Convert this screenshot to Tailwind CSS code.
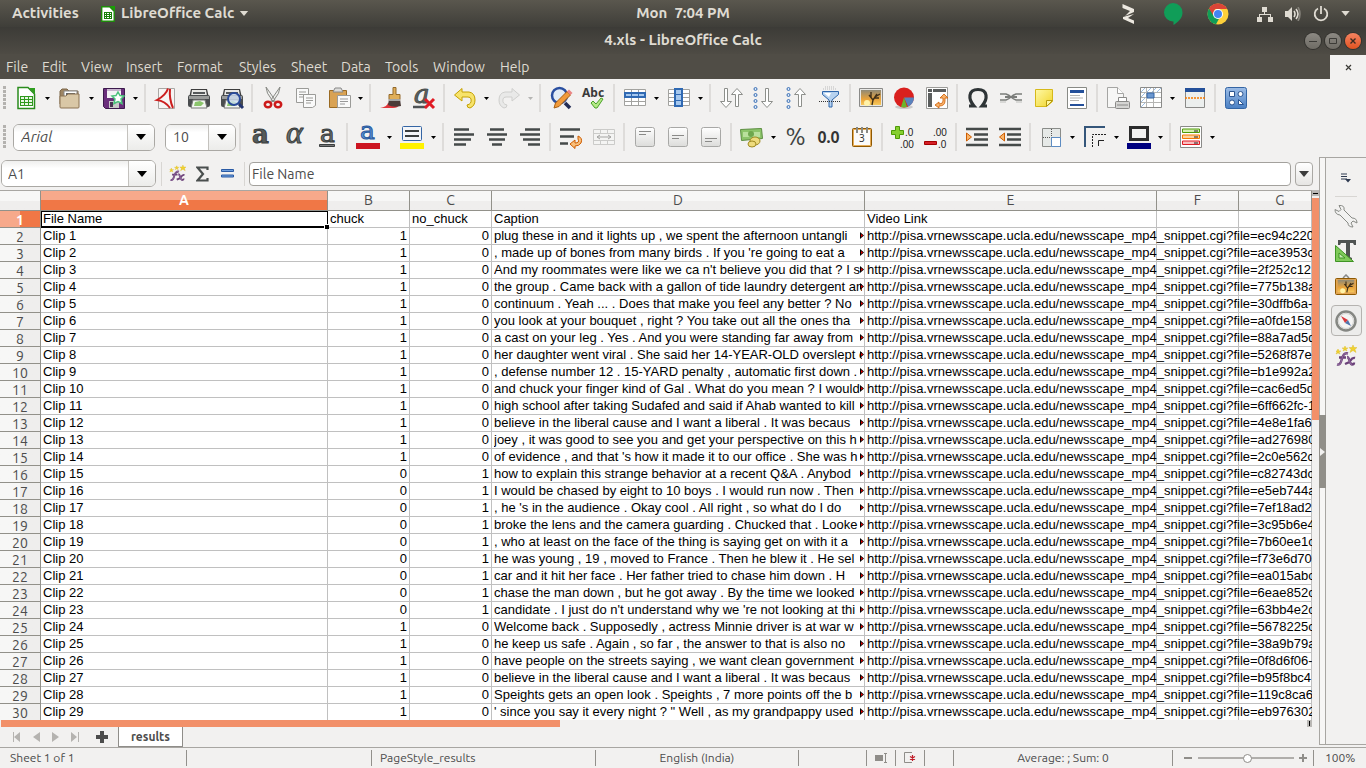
<!DOCTYPE html>
<html lang="en">
<head>
<meta charset="utf-8">
<meta name="viewport" content="width=device-width, initial-scale=1">
<title>4.xls - LibreOffice Calc</title>
<script src="https://cdn.jsdelivr.net/npm/@tailwindcss/browser@4"></script>
</head>
<body class="flex h-screen flex-col overflow-hidden bg-[#f2f1f0] font-['Ubuntu','Noto_Sans',sans-serif] text-[#4c4c4c]">

<!-- Shared symbols and gradients -->
<svg class="absolute size-0" aria-hidden="true">
  <defs>
    <linearGradient id="blueG" x1="0" y1="0" x2="0" y2="1"><stop offset="0" stop-color="#9dbde6"/><stop offset="1" stop-color="#4a80c4"/></linearGradient>
    <linearGradient id="yelG" x1="0" y1="0" x2="1" y2="1"><stop offset="0" stop-color="#fff9a8"/><stop offset="1" stop-color="#f0d52a"/></linearGradient>
    <linearGradient id="greyG" x1="0" y1="0" x2="0" y2="1"><stop offset="0" stop-color="#ffffff"/><stop offset="1" stop-color="#dcdcda"/></linearGradient>
    <linearGradient id="sunG" x1="0" y1="0" x2="0" y2="1"><stop offset="0" stop-color="#8f8a78"/><stop offset=".6" stop-color="#e8a23a"/><stop offset="1" stop-color="#f7c95c"/></linearGradient>
    <symbol id="arr" viewBox="0 0 5 3"><path d="M0 0h5L2.500 3z" fill="currentColor"/></symbol>
    <symbol id="caret" viewBox="0 0 10 6"><path d="M0 0h10L5 6z" fill="currentColor"/></symbol>
    <symbol id="printer" viewBox="0 0 24 24">
      <path d="M4 3h16l2 9H2z" fill="#3d3d3d"/><path d="M5 4h14l1 6H4z" fill="#e8e8e6"/><path d="M6 6h12v2H6z" fill="#55585a"/>
      <rect x="1" y="9" width="22" height="12" rx="2" fill="#4a4d4f"/><rect x="2" y="10" width="20" height="3" fill="#9a9c9b"/>
      <path d="M6 14h12l2 8H4z" fill="#f4f7f2" stroke="#777"/><path d="M8 16l5-1 4 2-3 3-7 0z" fill="#8bc56c"/>
    </symbol>
    <symbol id="fx" viewBox="0 0 22 22">
      <path d="M2 19.500c4 1 4-3 5-6s2-6 6-5M4 12.500h7M12 12c3 0 2 7 5 7.500q2 0 2-2M20 13c-3-1-4 2-5.500 4t-4.500 2" fill="none" stroke="#6b4179" stroke-width="2.400"/>
      <path d="M2 19.500c4 1 4-3 5-6s2-6 6-5M12 12c3 0 2 7 5 7.500" fill="none" stroke="#a27bb0" stroke-width=".8"/>
      <path d="M18 0l1 2.500h3l-2 2 1 3-3-2-3 2 1-3-2-2h3zM10 1l1 2h2l-2 1 1 2-2-1-2 1 1-2-2-1h2zM3 4l1 2h2l-2 1 1 2-2-1-2 1 1-2-1-1h1z" fill="#f0d130" stroke="#d9b818" stroke-width=".4"/>
    </symbol>
    <symbol id="tree" viewBox="0 0 24 20">
      <rect x="2" y="2" width="20" height="15" fill="url(#sunG)"/><circle cx="8" cy="15" r="3" fill="#fff2a8"/>
      <path d="M13 17l1-5-4-5M14 12l4-6M12 9l0-5M16 9l5-3M15 10l5 0" fill="none" stroke="#40301a" stroke-width="1.400"/>
    </symbol>
  </defs>
</svg>

<!-- Desktop panel -->
<header class="relative flex h-[27px] shrink-0 items-center bg-linear-to-b from-[#5a574e] to-[#3f3e39] text-[15px] font-bold text-[#dfdbd2]">
  <button class="ml-3 w-[69px] text-left">Activities</button>
  <button class="ml-5 flex items-center">
    <svg class="mr-[6px] h-4 w-[14px]" viewBox="0 0 14 16"><path d="M.700.700h8l4.500 4.500v10H.700z" fill="#fff" stroke="#1e8c0a" stroke-width="1.400"/><path d="M9 0h5v5z" fill="#18a303"/><path d="M3 6h8v7H3z" fill="#18800a"/><path d="M4 7h1v1H4zM6 7h2v1H6zM9 7h1v1H9zM4 9h1v1H4zM6 9h2v1H6zM9 9h1v1H9zM4 11h1v1H4zM6 11h2v1H6zM9 11h1v1H9z" fill="#fff"/></svg>
    <span>LibreOffice Calc</span>
    <svg class="ml-[5px] h-[5px] w-[10px]"><use href="#caret"/></svg>
  </button>
  <button class="absolute left-1/2 -translate-x-1/2">Mon&nbsp; 7:04 PM</button>
  <div class="ml-auto flex items-center pr-4">
    <button aria-label="Updates" class="mr-7"><svg class="h-[20px] w-[13px]" viewBox="0 0 13 20" fill="#ece8e0"><path d="M.500 0L12 5v3L3 12l5-5L.500 4z"/><path d="M12 10L6 14l6 2.500V20L1 15v-2z"/></svg></button>
    <button aria-label="Hangouts" class="mr-6"><svg class="h-[22px] w-[20px]" viewBox="0 0 20 22"><path d="M10 0a9.500 9.500 0 0 1 9.500 9.500c0 6-5 10-9 12.500v-3.500A9 9 0 0 1 1 9.500 9.500 9.500 0 0 1 10 0z" fill="#109d58"/></svg></button>
    <button aria-label="Chrome" class="mr-7"><svg class="size-[22px]" viewBox="0 0 22 22"><circle cx="11" cy="11" r="10.500" fill="#fdd03b"/><path d="M11 11L2 5.500A10.500 10.500 0 0 0 9 21.300L13.500 13z" fill="#109d58"/><path d="M11 .500A10.500 10.500 0 0 0 2 5.500L6 12l2-6h12.200A10.500 10.500 0 0 0 11 .500z" fill="#db4437"/><circle cx="11" cy="11" r="5" fill="#fff"/><circle cx="11" cy="11" r="4" fill="#4285f4"/></svg></button>
    <button aria-label="Network" class="mr-3"><svg class="size-4" viewBox="0 0 16 16" fill="#dfdbd2"><path d="M5 1h5v5H8v2h6v3h2v5h-5v-5h2V9H3v2h2v5H0v-5h2V8h5V6H5z"/></svg></button>
    <button aria-label="Volume" class="mr-3"><svg class="h-[14px] w-4" viewBox="0 0 16 14" fill="none" stroke="#dfdbd2" stroke-width="1.600"><path d="M0 4h3l4-4v14l-4-4H0z" fill="#dfdbd2" stroke="none"/><path d="M9 4q2 3 0 6M11 2q4 5 0 10"/><path d="M13 0q4 7 0 14" stroke="#85827a"/></svg></button>
    <button aria-label="Power" class="mr-3"><svg class="size-4" viewBox="0 0 16 16" fill="none" stroke="#dfdbd2" stroke-width="1.800"><path d="M5 2.500a6.300 6.300 0 1 0 6 0M8 0v8"/></svg></button>
    <button aria-label="System menu"><svg class="h-[5px] w-[9px]"><use href="#caret"/></svg></button>
  </div>
</header>

<!-- Window title -->
<div class="relative flex h-[27px] shrink-0 items-center justify-end gap-1 bg-linear-to-b from-[#3c3b37] to-[#4e4b44] text-[15px] font-bold text-[#dfdbd2]">
  <h1 class="absolute left-1/2 -translate-x-1/2">4.xls - LibreOffice Calc</h1>
  <button aria-label="Minimize" class="size-4 rounded-full bg-linear-to-b from-[#8c8983] to-[#6f6c65] text-[#3c3b37] ring-1 ring-[#33322e]"><svg viewBox="0 0 16 16"><path d="M4 8.500h8" stroke="currentColor"/></svg></button>
  <button aria-label="Maximize" class="size-4 rounded-full bg-linear-to-b from-[#8c8983] to-[#6f6c65] text-[#3c3b37] ring-1 ring-[#33322e]"><svg viewBox="0 0 16 16"><path d="M4.500 5.500h7v5h-7z" fill="none" stroke="currentColor"/></svg></button>
  <button aria-label="Close" class="mr-[5px] size-4 rounded-full bg-linear-to-b from-[#f58360] to-[#e2521c] text-[#3c2a20] ring-1 ring-[#33322e]"><svg viewBox="0 0 16 16"><path d="M5.500 5.500l5 5M10.500 5.500l-5 5" stroke="currentColor" stroke-width="1.400"/></svg></button>
</div>

<!-- Menu bar -->
<nav class="flex h-[25px] shrink-0 items-end bg-[#504d46] pl-[6px] text-sm leading-[23px] text-[#dfdbd2] *:text-left">
  <button class="w-9">File</button><button class="w-[39px]">Edit</button><button class="w-[45px]">View</button><button class="w-[51px]">Insert</button><button class="w-[62px]">Format</button><button class="w-[52px]">Styles</button><button class="w-[50px]">Sheet</button><button class="w-11">Data</button><button class="w-12">Tools</button><button class="w-[67px]">Window</button><button>Help</button>
  <button aria-label="Close document" class="ml-auto flex h-6 w-9 items-center justify-center bg-[#f2f1f0] text-[#3c3b37]"><svg class="size-[7px]" viewBox="0 0 7 7"><path d="M1 1l5 5M6 1L1 6" stroke="currentColor" stroke-width="1.200"/></svg></button>
</nav>

<!-- Standard toolbar -->
<div role="toolbar" aria-label="Standard" class="flex h-[38px] shrink-0 items-center [&_svg]:overflow-visible [&>button]:flex [&>button]:h-7 [&>button]:shrink-0 [&>button]:items-center [&>button]:justify-center [&>i]:mx-[3px] [&>i]:h-7 [&>i]:w-[2px] [&>i]:shrink-0 [&>i]:bg-[#dedcda]">
  <span class="mr-[3px] ml-[3px] h-6 w-[3px] bg-[repeating-linear-gradient(#b4b2af_0_3px,#f2f1f0_3px_4px)]"></span>
  <button class="w-[33px]" aria-label="New"><svg class="size-6" viewBox="0 0 24 24"><path d="M4 1.500h10l6.500 6.500v14.500H4z" fill="#fff" stroke="#2a8c1c" stroke-width="1.500"/><path d="M15 2h6v6z" fill="#2f9e1f"/><path d="M6 10h13v10H6z" fill="#2e9a1c"/><path d="M7 11h3v2H7zM11 11h3v2h-3zM15 11h3v2h-3zM7 14h3v2H7zM11 14h3v2h-3zM15 14h3v2h-3zM7 17h3v2H7zM11 17h3v2h-3zM15 17h3v2h-3z" fill="#e9f7e5"/></svg></button>
  <button class="w-[11px] text-black" aria-label="New menu"><svg class="h-[3px] w-[5px]"><use href="#arr"/></svg></button>
  <button class="w-[33px]" aria-label="Open"><svg class="size-6" viewBox="0 0 24 24"><path d="M2 18V5l2-2h5l2 2h9v13z" fill="#9d8463" stroke="#7c6648"/><path d="M6 5h13v8H6z" fill="#fff" stroke="#888"/><path d="M8 7h9v2H8z" fill="#666"/><path d="M2 10h6l2-2h11v13q0 1-1 1H3q-1 0-1-1z" fill="#d9c7a6" stroke="#8b7353"/></svg></button>
  <button class="w-[11px] text-black" aria-label="Open menu"><svg class="h-[3px] w-[5px]"><use href="#arr"/></svg></button>
  <button class="w-[33px]" aria-label="Save"><svg class="size-6" viewBox="0 0 24 24"><path d="M1.500 2.500h21v20h-19l-2-2z" fill="#6b2f7c" stroke="#3c1a4c"/><path d="M5 3h14v9H5z" fill="#f5f3f6"/><path d="M5 3h14v2H5z" fill="#c8b5ce"/><path d="M7 15h10v7H7z" fill="#c9c9c7"/><path d="M8 16h3v5H8z" fill="#4a3352"/><path d="M16 6l2 3.500 4 .500-3 3 1 4.500-4-2-4 2 1-4.500-3-3 4-.500z" fill="#fff" stroke="#4cc27c" stroke-width="1.500"/></svg></button>
  <button class="w-[11px] text-black" aria-label="Save menu"><svg class="h-[3px] w-[5px]"><use href="#arr"/></svg></button>
  <i></i>
  <button class="w-[33px]" aria-label="Export as PDF"><svg class="size-6" viewBox="0 0 24 24"><path d="M4.500 2.500h16v20h-16z" fill="#f7f5f4" stroke="#aaa7a4"/><path d="M14 2.500Q12 9 3 14q8 1 13 8M16 3q-1 10 3 19" fill="none" stroke="#cc1f1f" stroke-width="2"/></svg></button>
  <button class="w-[33px]" aria-label="Print"><svg class="size-6"><use href="#printer"/></svg></button>
  <button class="w-[33px]" aria-label="Print preview"><svg class="size-6" viewBox="0 0 24 24"><use href="#printer"/><circle cx="14" cy="13" r="6" fill="#cfe0f3" fill-opacity=".8" stroke="#2a4b9b" stroke-width="2"/><path d="M19 18l4 4" stroke="#23346e" stroke-width="3"/></svg></button>
  <i></i>
  <button class="w-[33px]" aria-label="Cut"><svg class="size-6" viewBox="0 0 24 24"><path d="M5 1q0 6 6 13l2 2 1-2zM19 1q0 6-6 13l-2 2-1-2z" fill="#eeeeec" stroke="#888a85"/><ellipse cx="7" cy="18.500" rx="3.200" ry="2.800" fill="none" stroke="#cc1a1a" stroke-width="2.500"/><ellipse cx="17" cy="18.500" rx="3.200" ry="2.800" fill="none" stroke="#cc1a1a" stroke-width="2.500"/></svg></button>
  <button class="w-[33px]" aria-label="Copy"><svg class="size-6" viewBox="0 0 24 24" fill="#fafafa" stroke="#9b9b98"><path d="M2.500 2.500h12v14h-12z"/><path d="M5 6h7M5 8.500h7M5 11h5"/><path d="M9.500 8.500h12v11l-3 2h-9z"/><path d="M12 12h7M12 14.500h7M12 17h5"/></svg></button>
  <button class="w-[33px]" aria-label="Paste"><svg class="size-6" viewBox="0 0 24 24"><path d="M2.500 4.500h17v17h-17z" fill="#d9a253" stroke="#9a6a22"/><path d="M6 6l2-4h6l2 4z" fill="#dcdcda" stroke="#888"/><path d="M10.500 9.500h13v12h-13z" fill="#fafafa" stroke="#9b9b98"/><path d="M13 13h8M13 15.500h8M13 18h5" stroke="#999"/></svg></button>
  <button class="w-[11px] text-black" aria-label="Paste menu"><svg class="h-[3px] w-[5px]"><use href="#arr"/></svg></button>
  <i></i>
  <button class="w-[33px]" aria-label="Clone formatting"><svg class="size-6" viewBox="0 0 24 24"><path d="M1 22q7-1 8-5l11 2q-1 3-6 3z" fill="#e0343a"/><path d="M14 1.500h3v7h4v5H10v-5h4z" fill="#e0ae58" stroke="#93692a"/><path d="M10 13h11l1 7q-8 2-13-1z" fill="#4b3b38"/><path d="M10 13h11v2H10z" fill="#a5a5a3"/></svg></button>
  <button class="w-[33px]" aria-label="Clear formatting"><svg class="size-6" viewBox="0 0 24 24"><text x="2" y="17" font-family="DejaVu Serif" font-size="26" font-style="italic" fill="#5d6362" stroke="#4a4f4e">a</text><path d="M1 21h13" stroke="#4e5254" stroke-width="2.500"/><path d="M13 13l9 9M22 13l-9 9" stroke="#e01b24" stroke-width="3"/></svg></button>
  <i></i>
  <button class="w-[33px]" aria-label="Undo"><svg class="size-6" viewBox="0 0 24 24"><path d="M1.500 9L9 2.500V6h7q6 1 6 8 0 6-5 8-3 0-3-3 5-1 4-6-.500-2-3-2H9v4z" fill="#f7e36b" stroke="#c4a000" stroke-linejoin="round"/></svg></button>
  <button class="w-[11px] text-black" aria-label="Undo menu"><svg class="h-[3px] w-[5px]"><use href="#arr"/></svg></button>
  <button class="w-[33px]" aria-label="Redo" disabled><svg class="size-6" viewBox="0 0 24 24"><path d="M22.500 9L15 2.500V6H8q-6 1-6 8 0 6 5 8 3 0 3-3-5-1-4-6 .500-2 3-2h6v4z" fill="#e9e9e8" stroke="#cfcfcd" stroke-linejoin="round"/></svg></button>
  <button class="w-[11px] text-[#b5b5b3]" aria-label="Redo menu" disabled><svg class="h-[3px] w-[5px]"><use href="#arr"/></svg></button>
  <i></i>
  <button class="w-[33px]" aria-label="Find and replace"><svg class="size-6" viewBox="0 0 24 24"><path d="M16 17l5 5" stroke="#222c55" stroke-width="3.500"/><circle cx="10.500" cy="9.500" r="7.500" fill="#e2ecf7" stroke="#2a4fa0" stroke-width="2.500"/><path d="M5 22l1.500-5L18 5.500 21.500 9 10 20.500z" fill="#f19a3a" stroke="#a85f12"/><path d="M18 5.500l2-2 3.500 3.500-2 2z" fill="#ea8585"/></svg></button>
  <button class="w-[33px]" aria-label="Spelling"><svg class="size-6" viewBox="0 0 24 24"><text x="0" y="11" font-family="Noto Sans" font-size="12" font-weight="bold" fill="#3a3a3a">Abc</text><path d="M9 17l2-2 3 3 5-6 2 1-6 9h-2z" fill="#b4ea86" stroke="#4aa12a"/></svg></button>
  <i></i>
  <button class="w-[33px]" aria-label="Row"><svg class="size-6" viewBox="0 0 24 24"><path d="M1.500 3.500h21v16h-21zM1.500 15.500h21M8.500 3v17M15.500 3v17" fill="#fff" stroke="#a2a29f"/><path d="M1 6h22v6H1z" fill="#2f69b3"/><path d="M3 8h5v2H3zM9 8h6v2H9zM16 8h5v2h-5z" fill="#a6c8ee"/></svg></button>
  <button class="w-[11px] text-black" aria-label="Row menu"><svg class="h-[3px] w-[5px]"><use href="#arr"/></svg></button>
  <button class="w-[33px]" aria-label="Column"><svg class="size-6" viewBox="0 0 24 24"><path d="M1.500 3.500h21v16h-21zM1.500 7.500h21M1.500 11.500h21M1.500 15.500h21" fill="#fff" stroke="#a2a29f"/><path d="M7 2h9v19H7z" fill="#2f69b3"/><path d="M9 4h5v4H9zM9 9h5v5H9zM9 15h5v4H9z" fill="#a6c8ee"/></svg></button>
  <button class="w-[11px] text-black" aria-label="Column menu"><svg class="h-[3px] w-[5px]"><use href="#arr"/></svg></button>
  <i></i>
  <button class="w-[33px]" aria-label="Sort"><svg class="size-6" viewBox="0 0 24 24" fill="#fff" stroke="#8d8f8b"><path d="M5.500 2.500h3v13h4l-5.500 6-5.500-6h4z"/><path d="M16.500 20.500h3v-12h4l-5.500-6-5.500 6h4z"/></svg></button>
  <button class="w-[33px]" aria-label="Sort ascending"><svg class="size-6" viewBox="0 0 24 24" fill="#fff" stroke="#8d8f8b"><path d="M13.500 2.500h3v13h4l-5.500 6-5.500-6h4z"/><g stroke="#3a6fb5" fill="#dbe8f7"><circle cx="3.500" cy="3" r="1.500"/><circle cx="3.500" cy="9" r="1.500"/><circle cx="3.500" cy="15" r="1.500"/><circle cx="3.500" cy="21" r="1.500"/></g></svg></button>
  <button class="w-[33px]" aria-label="Sort descending"><svg class="size-6" viewBox="0 0 24 24" fill="#fff" stroke="#8d8f8b"><path d="M13.500 20.500h3v-12h4l-5.500-6-5.500 6h4z"/><g stroke="#3a6fb5" fill="#dbe8f7"><circle cx="3.500" cy="3" r="1.500"/><circle cx="3.500" cy="9" r="1.500"/><circle cx="3.500" cy="15" r="1.500"/><circle cx="3.500" cy="21" r="1.500"/></g></svg></button>
  <button class="w-[33px]" aria-label="AutoFilter"><svg class="size-6" viewBox="0 0 24 24"><path d="M5 3h14M7 1h10" stroke="#bbb" stroke-dasharray="1 1"/><path d="M4.500 5.500h16v3L14 14v7h-3v-7L4.500 8.500z" fill="#b7d2ef" stroke="#2f66ab"/><path d="M6 7h7l-2 4z" fill="#fff"/><path d="M1 15.500h22" stroke="#333" stroke-dasharray="1 1"/></svg></button>
  <i></i>
  <button class="w-[33px]" aria-label="Image"><svg class="h-[20px] w-6" viewBox="0 0 24 20"><path d="M.500.500h23v18H.500z" fill="#e8e8e6" stroke="#8a8a88"/><use href="#tree" width="24" height="20"/></svg></button>
  <button class="w-[33px]" aria-label="Chart"><svg class="size-6" viewBox="0 0 24 24"><ellipse cx="12" cy="21" rx="9" ry="2" fill="#ccc"/><circle cx="12" cy="11.500" r="10" fill="#d9201e"/><path d="M12 11.500h10a10 10 0 0 1-6 9z" fill="#5a83bd"/><path d="M12 11.500l3 9.500a10 10 0 0 1-6 0z" fill="#6cb52c"/></svg></button>
  <button class="w-[33px]" aria-label="Pivot table"><svg class="size-6" viewBox="0 0 24 24"><path d="M1.500 1.500h21v21h-21z" fill="#fff" stroke="#9b9b98"/><path d="M3 3h4v3H3zM8 3h13v3H8zM3 7h4v14H3z" fill="#5a5d5d"/><path d="M19 8l-4 4h3v3q0 3-4 3v-2l-4 3 4 3v-2q6 0 6-5v-3h3z" fill="#f7b26b" stroke="#ce5c00" stroke-width=".8"/></svg></button>
  <i></i>
  <button class="w-[33px]" aria-label="Special character"><svg class="size-6" viewBox="0 0 24 24"><path d="M3 20h5C2 13 2 3.500 12 3.500s10 9.500 4 16.500h5" fill="none" stroke="#2e3436" stroke-width="3.200"/></svg></button>
  <button class="w-[33px]" aria-label="Hyperlink"><svg class="size-6" viewBox="0 0 24 24" fill="none" stroke="#7b7d7a" stroke-width="1.500"><path d="M1 8h6q3 1 5 3 2-2 5-3h6M1 14h6q3-1 5-3 2 2 5 3h6"/><path d="M6 11h12" stroke-width="2"/><path d="M1 16h6M17 16h6" stroke="#cfcfcd"/></svg></button>
  <button class="w-[33px]" aria-label="Comment"><svg class="size-6" viewBox="0 0 24 24"><path d="M3.500 3.500h17v12l-6 5h-11z" fill="url(#yelG)" stroke="#d6b91a"/><path d="M20.500 14.500h-6v6z" fill="#fff7a0" stroke="#b59a0c"/></svg></button>
  <button class="w-[33px]" aria-label="Headers and footers"><svg class="size-6" viewBox="0 0 24 24"><path d="M2.500 1.500h19v21h-19z" fill="#fff" stroke="#888a85"/><path d="M5 4h14v3H5zM5 18h14v2H5z" fill="#24509a"/><path d="M5 9.500h10M5 12h13M5 14.500h9" stroke="#b5b5b3"/></svg></button>
  <i></i>
  <button class="w-[33px]" aria-label="Define print area"><svg class="size-6" viewBox="0 0 24 24"><path d="M1.500 1.500h10l6 6v14h-16z" fill="#f7f7f6" stroke="#a5a5a3"/><path d="M11.500 1.500v6h6" fill="#fff" stroke="#a5a5a3"/><path d="M12.500 11.500h8v4h-8z" fill="#fff" stroke="#8a8a88"/><rect x="9.500" y="15.500" width="14" height="7" rx="1" fill="#d5d5d3" stroke="#8a8a88"/><path d="M11 19h11" stroke="#8a8a88"/></svg></button>
  <button class="w-[33px]" aria-label="Freeze"><svg class="size-6" viewBox="0 0 24 24"><path d="M1.500 1.500h21v20h-21z" fill="#fff" stroke="#8a8a88"/><path d="M2 6l4-4M2 11l5-5M2 16l5-5M2 21l5-5M8 6l4-4M13 6l4-4M18 6l4-4" stroke="#9cbce0"/><path d="M7.500 2v19M2 6.500h20M2 11.500h20M2 16.500h20M14.500 2v19" stroke="#b5b5b3"/><path d="M8 7h7v5H8z" fill="#6b97d0" stroke="#3465a4"/></svg></button>
  <button class="w-[11px] text-black" aria-label="Freeze menu"><svg class="h-[3px] w-[5px]"><use href="#arr"/></svg></button>
  <button class="w-[33px]" aria-label="Split window"><svg class="size-6" viewBox="0 0 24 24"><path d="M2.500 2.500h19v19h-19z" fill="#ecefee" stroke="#8a8a88"/><path d="M2 2h20v4H2z" fill="#24509a"/><path d="M2 12h20" stroke="#f57900" stroke-width="1.500" stroke-dasharray="2 1"/></svg></button>
  <i></i>
  <button class="w-[33px]" aria-label="Draw functions"><svg class="size-6" viewBox="0 0 24 24"><rect x="1.500" y="1.500" width="21" height="21" rx="2" fill="url(#blueG)" stroke="#3465a4"/><g fill="#fff" stroke="#2c5590"><path d="M5.500 5.500h5v5h-5z"/><circle cx="16.500" cy="8" r="2.500"/><circle cx="8" cy="16.500" r="2.500"/><path d="M14.500 13.500v5h5z"/></g></svg></button>
</div>

<!-- Formatting toolbar -->
<div role="toolbar" aria-label="Formatting" class="flex h-10 shrink-0 items-center [&_svg]:overflow-visible [&>button]:flex [&>button]:h-7 [&>button]:shrink-0 [&>button]:items-center [&>button]:justify-center [&>i]:mx-[3px] [&>i]:h-7 [&>i]:w-[2px] [&>i]:shrink-0 [&>i]:bg-[#dedcda]">
  <span class="ml-[3px] h-6 w-[3px] bg-[repeating-linear-gradient(#b4b2af_0_3px,#f2f1f0_3px_4px)]"></span>
  <div class="ml-[7px] flex h-[27px] w-[142px] shrink-0 overflow-hidden rounded-md border border-[#aaa8a4] bg-white">
    <input aria-label="Font name" value="Arial" class="min-w-0 flex-1 bg-linear-to-b from-[#efefee] to-white to-30% pl-[7px] text-[15px] italic outline-none">
    <button aria-label="Font list" class="flex w-[27px] items-center justify-center border-l border-[#c4c2be] bg-linear-to-b from-white to-[#ececea] text-black"><svg class="h-[6px] w-[10px]"><use href="#caret"/></svg></button>
  </div>
  <div class="ml-[10px] flex h-[27px] w-[71px] shrink-0 overflow-hidden rounded-md border border-[#aaa8a4] bg-white">
    <input aria-label="Font size" value="10" class="min-w-0 flex-1 bg-linear-to-b from-[#efefee] to-white to-30% pl-[7px] text-sm outline-none">
    <button aria-label="Size list" class="flex w-[27px] items-center justify-center border-l border-[#c4c2be] bg-linear-to-b from-white to-[#ececea] text-black"><svg class="h-[6px] w-[10px]"><use href="#caret"/></svg></button>
  </div>
  <i></i>
  <button class="w-[33px]" aria-label="Bold"><svg class="size-6" viewBox="0 0 24 24"><text x="3" y="18" font-family="DejaVu Serif" font-size="26" font-weight="bold" fill="#555b5a" stroke="#3a3e3e">a</text></svg></button>
  <button class="w-[33px]" aria-label="Italic"><svg class="size-6" viewBox="0 0 24 24"><text x="4" y="18" font-family="Liberation Serif" font-size="32" font-style="italic" fill="#6a706f" stroke="#3a3e3e">α</text></svg></button>
  <button class="w-[33px]" aria-label="Underline"><svg class="size-6" viewBox="0 0 24 24"><text x="5" y="17" font-family="DejaVu Serif" font-size="25" fill="#6a706f" stroke="#3a3e3e">a</text><path d="M4.500 19.500h15v2h-15z" fill="#777" stroke="#3a3e3e"/></svg></button>
  <i></i>
  <button class="w-[33px]" aria-label="Font color"><svg class="h-6 w-6" viewBox="0 0 24 24"><text x="4" y="14" font-family="DejaVu Serif" font-size="25" fill="#5c92d6" stroke="#2a5a9e">a</text><path d="M0 18h24v6H0z" fill="#cc1420"/></svg></button>
  <button class="w-[11px] text-black" aria-label="Font color menu"><svg class="h-[3px] w-[5px]"><use href="#arr"/></svg></button>
  <button class="w-[33px]" aria-label="Highlighting"><svg class="h-6 w-6" viewBox="0 0 24 24"><rect x="2.500" y="1.500" width="19" height="14" rx="1" fill="#f3f5f8" stroke="#3465a4"/><path d="M5 6h14M5 11h14" stroke="#3a3e3e" stroke-width="2"/><path d="M0 18h24v6H0z" fill="#fff200"/></svg></button>
  <button class="w-[11px] text-black" aria-label="Highlighting menu"><svg class="h-[3px] w-[5px]"><use href="#arr"/></svg></button>
  <i></i>
  <button class="w-[33px]" aria-label="Align left"><svg class="size-6" viewBox="0 0 24 24"><path d="M2 4.500h15M2 9.500h20M2 14.500h17M2 19.500h12" stroke="#454a49" stroke-width="2.500"/></svg></button>
  <button class="w-[33px]" aria-label="Align center"><svg class="size-6" viewBox="0 0 24 24"><path d="M5 4.500h14M2 9.500h20M4 14.500h16M7 19.500h10" stroke="#454a49" stroke-width="2.500"/></svg></button>
  <button class="w-[33px]" aria-label="Align right"><svg class="size-6" viewBox="0 0 24 24"><path d="M7 4.500h15M2 9.500h20M5 14.500h17M10 19.500h12" stroke="#454a49" stroke-width="2.500"/></svg></button>
  <i></i>
  <button class="w-[33px]" aria-label="Wrap text"><svg class="size-6" viewBox="0 0 24 24"><path d="M1 4.500h20M1 11.500h14M1 18.500h8" stroke="#454a49" stroke-width="2.500"/><path d="M19 11q5 2 3 7-2 3-6 3v2.500L11 19l5-4v3q5 0 3-4z" fill="#f9c07c" stroke="#ce5c00"/></svg></button>
  <button class="w-[33px]" aria-label="Merge cells" disabled><svg class="size-6" viewBox="0 0 24 24" fill="#f4f4f3" stroke="#cbcbc9"><path d="M1.500 4.500h21v15h-21zM1.500 8.500h21M1.500 15.500h21M8.500 5v3M15.500 5v3M8.500 16v3M15.500 16v3"/><path d="M5 12h14M8 10l-3 2 3 2M16 10l3 2-3 2" stroke="#a5a5a3"/></svg></button>
  <i></i>
  <button class="w-[33px]" aria-label="Align top"><svg class="size-6" viewBox="0 0 24 24"><rect x="2.500" y="2.500" width="19" height="19" rx="2" fill="url(#greyG)" stroke="#a8a8a6"/><path d="M6 6.500h12M6 9.500h7" stroke="#8a8a88"/></svg></button>
  <button class="w-[33px]" aria-label="Center vertically"><svg class="size-6" viewBox="0 0 24 24"><rect x="2.500" y="2.500" width="19" height="19" rx="2" fill="url(#greyG)" stroke="#a8a8a6"/><path d="M6 10.500h12M6 13.500h7" stroke="#8a8a88"/></svg></button>
  <button class="w-[33px]" aria-label="Align bottom"><svg class="size-6" viewBox="0 0 24 24"><rect x="2.500" y="2.500" width="19" height="19" rx="2" fill="url(#greyG)" stroke="#a8a8a6"/><path d="M6 13.500h12M6 16.500h7" stroke="#8a8a88"/></svg></button>
  <i></i>
  <button class="w-[33px]" aria-label="Currency"><svg class="size-6" viewBox="0 0 24 24"><path d="M.500 4.500l21-1 1 10-21 2z" fill="#8cc46a" stroke="#5d8f42"/><path d="M3 7h17v5H3z" fill="#b9e09c"/><circle cx="11" cy="9" r="3" fill="#6ea74d"/><ellipse cx="15" cy="16" rx="5" ry="4" fill="#eedb7d" stroke="#a08a22"/><ellipse cx="12" cy="19" rx="4" ry="3" fill="#eedb7d" stroke="#a08a22"/></svg></button>
  <button class="w-[11px] text-black" aria-label="Currency menu"><svg class="h-[3px] w-[5px]"><use href="#arr"/></svg></button>
  <button class="w-[33px] text-2xl leading-6 text-[#3f4342]" aria-label="Percent">%</button>
  <button class="w-[33px] text-base font-bold text-[#333]" aria-label="Number">0.0</button>
  <button class="w-[33px]" aria-label="Date"><svg class="size-6" viewBox="0 0 24 24"><rect x="2.500" y="3.500" width="19" height="18" rx="1" fill="#e6ac56" stroke="#8f5902"/><path d="M4 5h16v15H4z" fill="#fbfbfa"/><path d="M7 2v6M17 2v6M12 2v6" stroke="#888a85" stroke-width="2"/><text x="9" y="17" font-family="Noto Sans" font-size="10" fill="#333">3</text></svg></button>
  <i></i>
  <button class="w-[33px]" aria-label="Add decimal place"><svg class="size-6" viewBox="0 0 24 24"><path d="M4.500 1.500h4v4h4v4h-4v4h-4v-4h-4v-4h4z" fill="#86cf30" stroke="#4e9a06"/><text x="14" y="11" font-family="Liberation Sans" font-size="10" fill="#222">.0</text><text x="9" y="23" font-family="Liberation Sans" font-size="10" fill="#222">.00</text></svg></button>
  <button class="w-[33px]" aria-label="Delete decimal place"><svg class="size-6" viewBox="0 0 24 24"><path d="M.500 16.500h12v3H.500z" fill="#d51f26" stroke="#a40000"/><text x="9" y="11" font-family="Liberation Sans" font-size="10" fill="#222">.00</text><text x="14" y="23" font-family="Liberation Sans" font-size="10" fill="#222">.0</text></svg></button>
  <i></i>
  <button class="w-[33px]" aria-label="Increase indent"><svg class="size-6" viewBox="0 0 24 24"><path d="M1 4h22M9 9.500h14M9 14.500h14M1 20h22" stroke="#454a49" stroke-width="2.500"/><path d="M1.500 8v8l5-4z" fill="#f9b56b" stroke="#ce5c00"/></svg></button>
  <button class="w-[33px]" aria-label="Decrease indent"><svg class="size-6" viewBox="0 0 24 24"><path d="M1 4h22M9 9.500h14M9 14.500h14M1 20h22" stroke="#454a49" stroke-width="2.500"/><path d="M6.500 8v8l-5-4z" fill="#f9b56b" stroke="#ce5c00"/></svg></button>
  <i></i>
  <button class="w-[33px]" aria-label="Borders"><svg class="size-6" viewBox="0 0 24 24"><path d="M3.500 3.500h18v18h-18z" fill="#e6e9e7" stroke="#8a8c89"/><path d="M12.500 4v9M4 12.500h9" stroke="#555" stroke-dasharray="1 1"/><path d="M12.500 12.500h9v9h-9z" fill="#fff" stroke="#5d8cc2"/></svg></button>
  <button class="w-[11px] text-black" aria-label="Borders menu"><svg class="h-[3px] w-[5px]"><use href="#arr"/></svg></button>
  <button class="w-[33px]" aria-label="Border style"><svg class="size-6" viewBox="0 0 24 24"><path d="M2 22V2h20" fill="none" stroke="#35567a" stroke-width="2"/><path d="M9.500 22V9.500H23" fill="none" stroke="#222" stroke-dasharray="2 1"/><path d="M15.500 21v-5.500H21" fill="none" stroke="#222"/></svg></button>
  <button class="w-[11px] text-black" aria-label="Border style menu"><svg class="h-[3px] w-[5px]"><use href="#arr"/></svg></button>
  <button class="w-[33px]" aria-label="Border color"><svg class="h-6 w-6" viewBox="0 0 24 24"><path d="M3.500 2.500h17v12h-17z" fill="#f2f1f0" stroke="#2c2c2c" stroke-width="3"/><path d="M0 18h24v6H0z" fill="#00007f"/></svg></button>
  <button class="w-[11px] text-black" aria-label="Border color menu"><svg class="h-[3px] w-[5px]"><use href="#arr"/></svg></button>
  <i></i>
  <button class="w-[33px]" aria-label="Conditional formatting"><svg class="size-6" viewBox="0 0 24 24"><path d="M1.500 1.500h21v21h-21z" fill="#fff" stroke="#8a8a88"/><path d="M3.500 4h17v3.500h-17z" fill="#d6f0b2" stroke="#4e9a06"/><path d="M3.500 10h17v3.500h-17z" fill="#fcd3a0" stroke="#f57900"/><path d="M3.500 16h17v3.500h-17z" fill="#f9c0c0" stroke="#e01b24"/><path d="M15 6h4M15 12h4M15 18h4" stroke="#222"/></svg></button>
  <button class="w-[11px] text-black" aria-label="Conditional formatting menu"><svg class="h-[3px] w-[5px]"><use href="#arr"/></svg></button>
</div>

<main class="flex min-h-0 flex-1">
  <section class="flex min-w-0 flex-1 flex-col">
    <!-- Formula bar -->
    <div class="flex h-[33px] shrink-0 items-center pl-px">
      <div class="flex h-[27px] w-[155px] shrink-0 overflow-hidden rounded-md border border-[#aaa8a4] bg-white">
        <input aria-label="Name box" value="A1" class="min-w-0 flex-1 bg-linear-to-b from-[#efefee] to-white to-30% pl-[6px] text-sm outline-none">
        <button aria-label="Names" class="flex w-[27px] items-center justify-center border-l border-[#c4c2be] bg-linear-to-b from-white to-[#ececea] text-black"><svg class="h-[6px] w-[10px]"><use href="#caret"/></svg></button>
      </div>
      <i class="ml-[5px] h-6 w-px bg-[#d8d6d3]"></i>
      <button aria-label="Function wizard" class="ml-[7px]"><svg class="size-[17px]"><use href="#fx"/></svg></button>
      <button aria-label="Sum" class="ml-[10px]"><svg class="h-4 w-[13px]" viewBox="0 0 13 16"><path d="M11.500 4V1.500h-10L7 8l-5.500 6.500h10V12" fill="none" stroke="#4a4f4e" stroke-width="2.200"/></svg></button>
      <button aria-label="Formula" class="ml-3"><svg class="h-[9px] w-[13px]" viewBox="0 0 13 9"><path d="M.500.500h12v2H.500zM.500 6h12v2H.500z" fill="#6f9fdc" stroke="#2a5aa4"/></svg></button>
      <i class="ml-[10px] h-6 w-px bg-[#d8d6d3]"></i>
      <input aria-label="Input line" value="File Name" class="ml-1 h-6 min-w-0 flex-1 rounded-sm border border-[#a3a19d] bg-white pl-[2px] text-sm outline-none">
      <button aria-label="Expand formula bar" class="mr-[6px] ml-1 flex h-6 w-[18px] shrink-0 items-center justify-center rounded-sm border border-[#aaa8a4] bg-linear-to-b from-white to-[#e6e5e3] text-[#3c3c3c]"><svg class="h-[6px] w-[10px]"><use href="#caret"/></svg></button>
    </div>

    <!-- Sheet -->
    <div class="flex min-h-0 flex-1">
      <div class="min-w-0 flex-1 overflow-hidden border-t border-[#a8a6a2] bg-white">
        <table class="w-full table-fixed border-separate border-spacing-0 font-['Liberation_Sans',Arial,sans-serif] text-[13px] leading-4 text-black">
          <colgroup><col class="w-[41px]"><col class="w-[287px]"><col class="w-[82px]"><col class="w-[82px]"><col class="w-[373px]"><col class="w-[292px]"><col class="w-[82px]"><col></colgroup>
          <thead>
            <tr class="h-5 bg-linear-to-b from-[#f7f7f6] from-50% to-[#efeeed] to-50% font-['Ubuntu','Noto_Sans',sans-serif] text-sm leading-[19px] text-[#4c4c4c] *:h-5 *:border-r *:border-b *:border-[#92918a] *:p-0 *:font-normal">
              <td></td>
              <th scope="col" class="bg-linear-to-b from-[#f7a98b] from-50% to-[#f07746] to-50% text-white"><b>A</b></th>
              <th scope="col">B</th><th scope="col">C</th><th scope="col">D</th><th scope="col">E</th><th scope="col">F</th><th scope="col" class="border-r-0"><div class="w-[82px]">G</div></th>
            </tr>
          </thead>
          <tbody id="rows"></tbody>
        </table>
      </div>
      <div class="flex w-[7px] shrink-0 flex-col">
        <div class="flex h-[6px] items-center justify-center bg-[#bab8b5]"><i class="h-px w-[5px] bg-black"></i></div>
        <div class="mt-[2px] h-[222px] bg-[#f29069]"></div>
      </div>
    </div>

    <div class="flex h-[7px] shrink-0 items-stretch pr-[7px] pl-px">
      <div class="h-[7px] w-[559px] bg-[#f29069]"></div>
      <div class="ml-auto flex w-[5px] items-center justify-center bg-[#bab8b5]"><i class="h-[5px] w-px bg-black"></i></div>
    </div>

    <!-- Sheet tabs -->
    <div class="flex h-5 shrink-0 items-start text-[13px]">
      <div class="flex h-[19px] items-center pl-[13px] text-[#b5b3b0]">
        <button aria-label="First sheet"><svg class="h-[10px] w-2" viewBox="0 0 8 10" fill="currentColor"><path d="M0 0h1v10H0zM7 0v10L1 5z"/></svg></button>
        <button aria-label="Previous sheet" class="ml-3"><svg class="h-[10px] w-2" viewBox="0 0 8 10" fill="currentColor"><path d="M7 0v10L0 5z"/></svg></button>
        <button aria-label="Next sheet" class="ml-[11px]"><svg class="h-[10px] w-2" viewBox="0 0 8 10" fill="currentColor"><path d="M0 0v10l7-5z"/></svg></button>
        <button aria-label="Last sheet" class="ml-[11px]"><svg class="h-[10px] w-2" viewBox="0 0 8 10" fill="currentColor"><path d="M0 0v10l6-5zM7 0h1v10H7z"/></svg></button>
        <button aria-label="Add sheet" class="ml-[17px]"><svg class="size-3" viewBox="0 0 12 12"><path d="M4 0h4v4h4v4H8v4H4V8H0V4h4z" fill="#4c4c4c"/></svg></button>
      </div>
      <button class="ml-[10px] flex h-5 w-[65px] items-center justify-center border border-t-0 border-[#8f8d89] bg-white text-[12px] font-bold">results</button>
    </div>
  </section>

  <!-- Sidebar splitter -->
  <div class="mb-[2px] flex w-[7px] shrink-0 flex-col border border-[#a8a6a2] bg-[#f7f6f5]">
    <button aria-label="Hide sidebar" class="-mx-px mt-[257px] flex h-[73px] items-center justify-center bg-[#918f89]"><svg class="h-2 w-[5px]" viewBox="0 0 5 8"><path d="M0 0v8l5-4z" fill="#f2f1f0"/></svg></button>
  </div>

  <!-- Sidebar tabs -->
  <aside class="mb-[2px] flex w-10 shrink-0 flex-col items-center gap-1 border-y border-[#a8a6a2] [&>button]:flex [&>button]:size-[31px] [&>button]:items-center [&>button]:justify-center">
    <button aria-label="Sidebar settings" class="mt-1"><svg class="h-[10px] w-[10px]" viewBox="0 0 10 10"><path d="M0 1h6M0 3.500h6M0 6h6" stroke="#2e3a50"/><path d="M4 6h6L7 9.500z" fill="#2e3a50"/></svg></button>
    <i class="-mt-px h-px w-[22px] bg-[#d8d6d3]"></i>
    <button aria-label="Properties" class="-mt-px"><svg class="size-6" viewBox="0 0 24 24"><path d="M5 1.500l2 4-2 2-4-2q0 5 5 5.500l8 8q0 4 5 4l-2-4 2-2 4 2q0-5-5-5l-8-8q1-5-5-4.500z" fill="#f2f2f1" stroke="#888a85"/></svg></button>
    <button aria-label="Styles"><svg class="size-6" viewBox="0 0 24 24"><path d="M4 1h18v5h-2l-1-2h-3v14l2 1v2h-8v-2l2-1V4H7L6 6H4z" fill="#4f5352"/><path d="M1.500 6.500v16h18z" fill="#7fca5a" stroke="#3f9424"/><path d="M5 14v5h6z" fill="#c9ecb5" stroke="#3f9424"/></svg></button>
    <button aria-label="Gallery"><svg class="size-6" viewBox="0 0 24 24"><path d="M9 4l3-3 3 3" fill="none" stroke="#888" stroke-width="1.500"/><rect x="1.500" y="4.500" width="21" height="16" rx="1" fill="#e3a551" stroke="#8f5902"/><use href="#tree" x="2" y="4" width="20" height="17"/></svg></button>
    <button aria-label="Navigator" class="rounded-sm border border-[#b5b3b0] bg-[#ececeb]"><svg class="size-6 shrink-0" viewBox="0 0 24 24"><circle cx="12" cy="12" r="9.500" fill="#f5f5f4" stroke="#858783" stroke-width="2.500"/><circle cx="12" cy="12" r="7.500" fill="none" stroke="#d3d3d1"/><path d="M7 7l7 4-3 3z" fill="#d9363b"/><path d="M17 17l-3-6-3 3z" fill="#4f74ad"/></svg></button>
    <button aria-label="Functions"><svg class="size-[22px]"><use href="#fx"/></svg></button>
  </aside>
</main>

<!-- Status bar -->
<footer class="flex h-[21px] shrink-0 items-center border-t border-[#a8a6a2] text-[12px] [&>span]:flex [&>span]:h-4 [&>span]:shrink-0 [&>span]:items-center [&>span]:border-r [&>span]:border-[#92908c]">
  <span class="w-[187px] pl-[10px]">Sheet 1 of 1</span>
  <span class="w-[185px]"></span>
  <span class="w-[224px] pl-2">PageStyle_results</span>
  <span class="w-[203px] justify-center">English (India)</span>
  <span class="w-[68px]"></span>
  <span class="w-[29px] justify-center"><svg class="h-[10px] w-[13px]" viewBox="0 0 13 10"><path d="M0 2h8v6H0z" fill="#8f8d89"/><path d="M9 .500h3M10.500 0v10M9 9.500h3" stroke="#8f8d89"/></svg></span>
  <span class="w-[29px] justify-center"><svg class="h-[12px] w-[12px]" viewBox="0 0 12 12"><path d="M8 .500H.500v10H8" fill="none" stroke="#8f8d89"/><path d="M8.500 3v6M6 4.500l5 3M11 4.500l-5 3" stroke="#c01c28" stroke-width="1.200"/></svg></span>
  <span class="w-[29px]"></span>
  <span class="flex-1 justify-center">Average: ; Sum: 0</span>
  <div class="flex w-[141px] shrink-0 items-center border-r border-[#92908c] pr-[6px] pl-[11px]">
    <button aria-label="Zoom out" class="flex h-4 w-[9px] items-center"><i class="h-[2px] w-2 bg-[#8f8d89]"></i></button>
    <div class="mx-[5px] flex flex-1 items-center"><input type="range" aria-label="Zoom" min="0" max="100" value="52" class="h-[2px] w-full appearance-none bg-[#b0aeab] [&::-webkit-slider-thumb]:size-[9px] [&::-webkit-slider-thumb]:appearance-none [&::-webkit-slider-thumb]:rounded-full [&::-webkit-slider-thumb]:border [&::-webkit-slider-thumb]:border-[#8f8d89] [&::-webkit-slider-thumb]:bg-white"></div>
    <button aria-label="Zoom in"><svg class="size-2" viewBox="0 0 8 8"><path d="M0 4h8M4 0v8" stroke="#8f8d89" stroke-width="2"/></svg></button>
  </div>
  <div class="w-[52px] shrink-0 pl-[11px]">100%</div>
</footer>

<script>
// chuck flag, caption, start of the clip's file id
const clips = [
  [1, "plug these in and it lights up , we spent the afternoon untangli", "ec94c220"],
  [1, ", made up of bones from many birds . If you 're going to eat a", "ace3953c"],
  [1, "And my roommates were like we ca n't believe you did that ? I s", "2f252c12"],
  [1, "the group . Came back with a gallon of tide laundry detergent an", "775b138a"],
  [1, "continuum . Yeah ... . Does that make you feel any better ? No", "30dffb6a-"],
  [1, "you look at your bouquet , right ? You take out all the ones tha", "a0fde158"],
  [1, "a cast on your leg . Yes . And you were standing far away from", "88a7ad5d"],
  [1, "her daughter went viral . She said her 14-YEAR-OLD overslept o", "5268f87e"],
  [1, ", defense number 12 . 15-YARD penalty , automatic first down .", "b1e992a2"],
  [1, "and chuck your finger kind of Gal . What do you mean ? I would", "cac6ed5d"],
  [1, "high school after taking Sudafed and said if Ahab wanted to kill", "6ff662fc-1"],
  [1, "believe in the liberal cause and I want a liberal . It was becaus", "4e8e1fa6"],
  [1, "joey , it was good to see you and get your perspective on this h", "ad276980"],
  [1, "of evidence , and that 's how it made it to our office . She was h", "2c0e562c"],
  [0, "how to explain this strange behavior at a recent Q&amp;A . Anybod", "c82743dc"],
  [0, "I would be chased by eight to 10 boys . I would run now . Then", "e5eb744a"],
  [0, ", he 's in the audience . Okay cool . All right , so what do I do", "7ef18ad2"],
  [0, "broke the lens and the camera guarding . Chucked that . Looke", "3c95b6e4"],
  [0, ", who at least on the face of the thing is saying get on with it a", "7b60ee1c"],
  [0, "he was young , 19 , moved to France . Then he blew it . He sel", "f73e6d70"],
  [0, "car and it hit her face . Her father tried to chase him down . H", "ea015abc"],
  [0, "chase the man down , but he got away . By the time we looked", "6eae852c"],
  [0, "candidate . I just do n't understand why we 're not looking at thi", "63bb4e2c"],
  [1, "Welcome back . Supposedly , actress Minnie driver is at war w", "5678225c"],
  [1, "he keep us safe . Again , so far , the answer to that is also no", "38a9b79a"],
  [1, "have people on the streets saying , we want clean government", "0f8d6f06-"],
  [1, "believe in the liberal cause and I want a liberal . It was becaus", "b95f8bc4"],
  [1, "Speights gets an open look . Speights , 7 more points off the b", "119c8ca6"],
  [1, "' since you say it every night ? \" Well , as my grandpappy used", "eb976302"],
];
const row = "*:h-[17px] *:border-r *:border-b *:border-[#c0c0c0] *:px-[2px] *:py-0 *:whitespace-nowrap";
const head = "border-[#92918a]! bg-linear-to-r from-[#f7f7f6] from-50% to-[#efeeed] to-50% text-center align-bottom font-['Ubuntu','Noto_Sans',sans-serif] text-sm leading-[13px] font-normal text-[#4c4c4c]";
const headOn = "border-[#92918a]! bg-linear-to-r from-[#f7a98b] from-50% to-[#f07746] to-50% text-center align-bottom font-['Ubuntu','Noto_Sans',sans-serif] text-sm leading-[13px] font-bold text-white";
let html = `<tr class="${row}"><th scope="row" class="${headOn}">1</th>
  <td class="relative">File Name<span class="absolute top-0 -right-px bottom-[-1px] left-0 border border-b-2 border-black"></span><span class="absolute -right-[2px] -bottom-[2px] z-10 size-[5px] border-t border-l border-white bg-black"></span></td>
  <td>chuck</td><td>no_chuck</td><td>Caption</td><td>Video Link</td><td></td><td class="border-r-0"></td></tr>`;
clips.forEach(([chuck, caption, id], i) => {
  html += `<tr class="${row}"><th scope="row" class="${head}">${i + 2}</th><td>Clip ${i + 1}</td>
    <td class="text-right">${chuck}</td><td class="text-right">${1 - chuck}</td>
    <td class="relative"><div class="overflow-hidden">${caption}</div><svg class="absolute top-[4px] right-0 h-[7px] w-1" viewBox="0 0 4 7"><path d="M0 0l4 3.500L0 7z" fill="#000"/><path d="M1 2l2 1.500L1 5z" fill="#e00"/></svg></td>
    <td>http://pisa.vrnewsscape.ucla.edu/newsscape_mp4_snippet.cgi?file=${id}</td><td></td><td class="border-r-0"></td></tr>`;
});
document.getElementById("rows").innerHTML = html;
</script>
</body>
</html>
